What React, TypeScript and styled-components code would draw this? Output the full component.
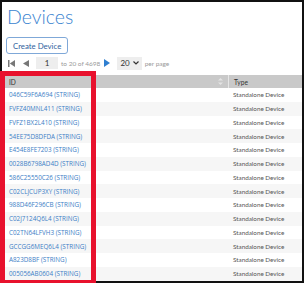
import styled, { createGlobalStyle } from 'styled-components';

const Global = createGlobalStyle`
  body {
    margin: 0;
    background: #ffffff;
    font-family: "Open Sans", "Noto Sans", sans-serif;
  }
`;

const Frame = styled.div`
  position: relative;
  box-sizing: border-box;
  width: 304px;
  height: 283px;
  border: 2px solid #111;
  background: #fff;
`;

const Content = styled.div`
  height: 100%;
  overflow: hidden;
`;

const Title = styled.h1`
  margin: 0;
  padding: 2px 0 0 5px;
  font-family: Lato, "Open Sans", sans-serif;
  font-size: 19.5px;
  font-weight: 300;
  line-height: 26px;
  color: #3a84d0;
`;

const CreateButton = styled.button`
  margin: 7px 0 0 4px;
  height: 17px;
  padding: 0 6px;
  background: #fff;
  border: 1px solid #7fa8d8;
  border-radius: 3px;
  font-family: Lato, "Open Sans", sans-serif;
  font-size: 7.8px;
  color: #2f5f9e;
  line-height: 14px;
`;

const Pager = styled.div`
  display: flex;
  align-items: center;
  height: 14px;
  margin: 2px 0 0 6px;
  font-family: Lato, "Open Sans", sans-serif;
  font-size: 6.5px;
  color: #9a9a9a;
`;

const PageBox = styled.div`
  width: 22px;
  height: 12px;
  margin: 0 3px 0 7px;
  background: #eeeeee;
  color: #333;
  font-size: 8px;
  line-height: 12px;
  text-align: center;
`;

const Select = styled.div`
  display: flex;
  align-items: center;
  gap: 3px;
  height: 13px;
  padding: 0 3px;
  margin: 0 3px 0 7px;
  background: #eeeeee;
  color: #333;
  font-size: 8px;
`;

const Table = styled.div`
  margin: 5px 0 0 2px;
  width: 300px;
  font-family: Lato, "Open Sans", sans-serif;
`;

const HeaderRow = styled.div`
  display: grid;
  grid-template-columns: 224px 1fr;
  height: 13px;
  background: #c9c9c9;
  font-size: 6.6px;
  color: #333;
`;

const HeaderCell = styled.div<{ $divider?: boolean }>`
  display: flex;
  align-items: center;
  justify-content: space-between;
  padding: 0 5px 0 5px;
  border-left: ${(p) => (p.$divider ? '1px solid #e6e6e6' : 'none')};
`;

const Row = styled.div<{ $alt: boolean }>`
  display: grid;
  grid-template-columns: 224px 1fr;
  height: 13.75px;
  align-items: center;
  background: ${(p) => (p.$alt ? '#f6f6f6' : '#ffffff')};
  font-size: 6.3px;
`;

const IdLink = styled.a`
  padding-left: 5px;
  font-family: "Open Sans", sans-serif;
  color: #3c7ec6;
  text-decoration: none;
  white-space: nowrap;
`;

const TypeCell = styled.div`
  padding-left: 5px;
  color: #555;
  white-space: nowrap;
`;

const Highlight = styled.div`
  position: absolute;
  left: -2px;
  top: 69px;
  width: 96px;
  height: 214px;
  box-sizing: border-box;
  border: 5px solid #e8112d;
  pointer-events: none;
`;

const ids = [
  '046C59F6A694',
  'FVFZ40MNL411',
  'FVFZ1BX2L410',
  '54EE75D8DFDA',
  'E454E8FE7203',
  '0028B6798AD4D',
  '586C25550C26',
  'C02CLJCUP3XY',
  '988D46F296CB',
  'C02J7124Q6L4',
  'C02TN64LFVH3',
  'GCCGG6MEQ6L4',
  'A823D8BF',
  '005056AB0604',
];

function SortIcon() {
  return (
    <svg width="5" height="7" viewBox="0 0 5 7">
      <path d="M2.5 0 L5 2.6 H0 Z" fill="#e4e4e4" />
      <path d="M2.5 7 L5 4.4 H0 Z" fill="#e4e4e4" />
    </svg>
  );
}

export default function App() {
  return (
    <>
      <Global />
      <Frame>
        <Content>
          <Title>Devices</Title>
          <CreateButton>Create Device</CreateButton>
          <Pager>
            <svg width="7" height="7" viewBox="0 0 7 7">
              <rect x="0" y="0" width="1.5" height="7" fill="#777" />
              <path d="M7 0 V7 L1.8 3.5 Z" fill="#777" />
            </svg>
            <svg width="6" height="7" viewBox="0 0 6 7" style={{ marginLeft: 8 }}>
              <path d="M6 0 V7 L0 3.5 Z" fill="#777" />
            </svg>
            <PageBox>1</PageBox>
            <span>to 20 of 4698</span>
            <svg width="6" height="8" viewBox="0 0 6 8" style={{ marginLeft: 4 }}>
              <path d="M0 0 V8 L6 4 Z" fill="#2f7fd0" />
            </svg>
            <Select>
              20
              <svg width="6" height="4" viewBox="0 0 6 4">
                <path d="M0.5 0.5 L3 3 L5.5 0.5" stroke="#333" strokeWidth="1.2" fill="none" />
              </svg>
            </Select>
            <span>per page</span>
          </Pager>
          <Table>
            <HeaderRow>
              <HeaderCell>
                <span>ID</span>
                <SortIcon />
              </HeaderCell>
              <HeaderCell $divider>
                <span>Type</span>
              </HeaderCell>
            </HeaderRow>
            {ids.map((id, i) => (
              <Row key={id} $alt={i % 2 === 1}>
                <IdLink href="#">{id} (STRING)</IdLink>
                <TypeCell>Standalone Device</TypeCell>
              </Row>
            ))}
          </Table>
        </Content>
        <Highlight />
      </Frame>
    </>
  );
}
